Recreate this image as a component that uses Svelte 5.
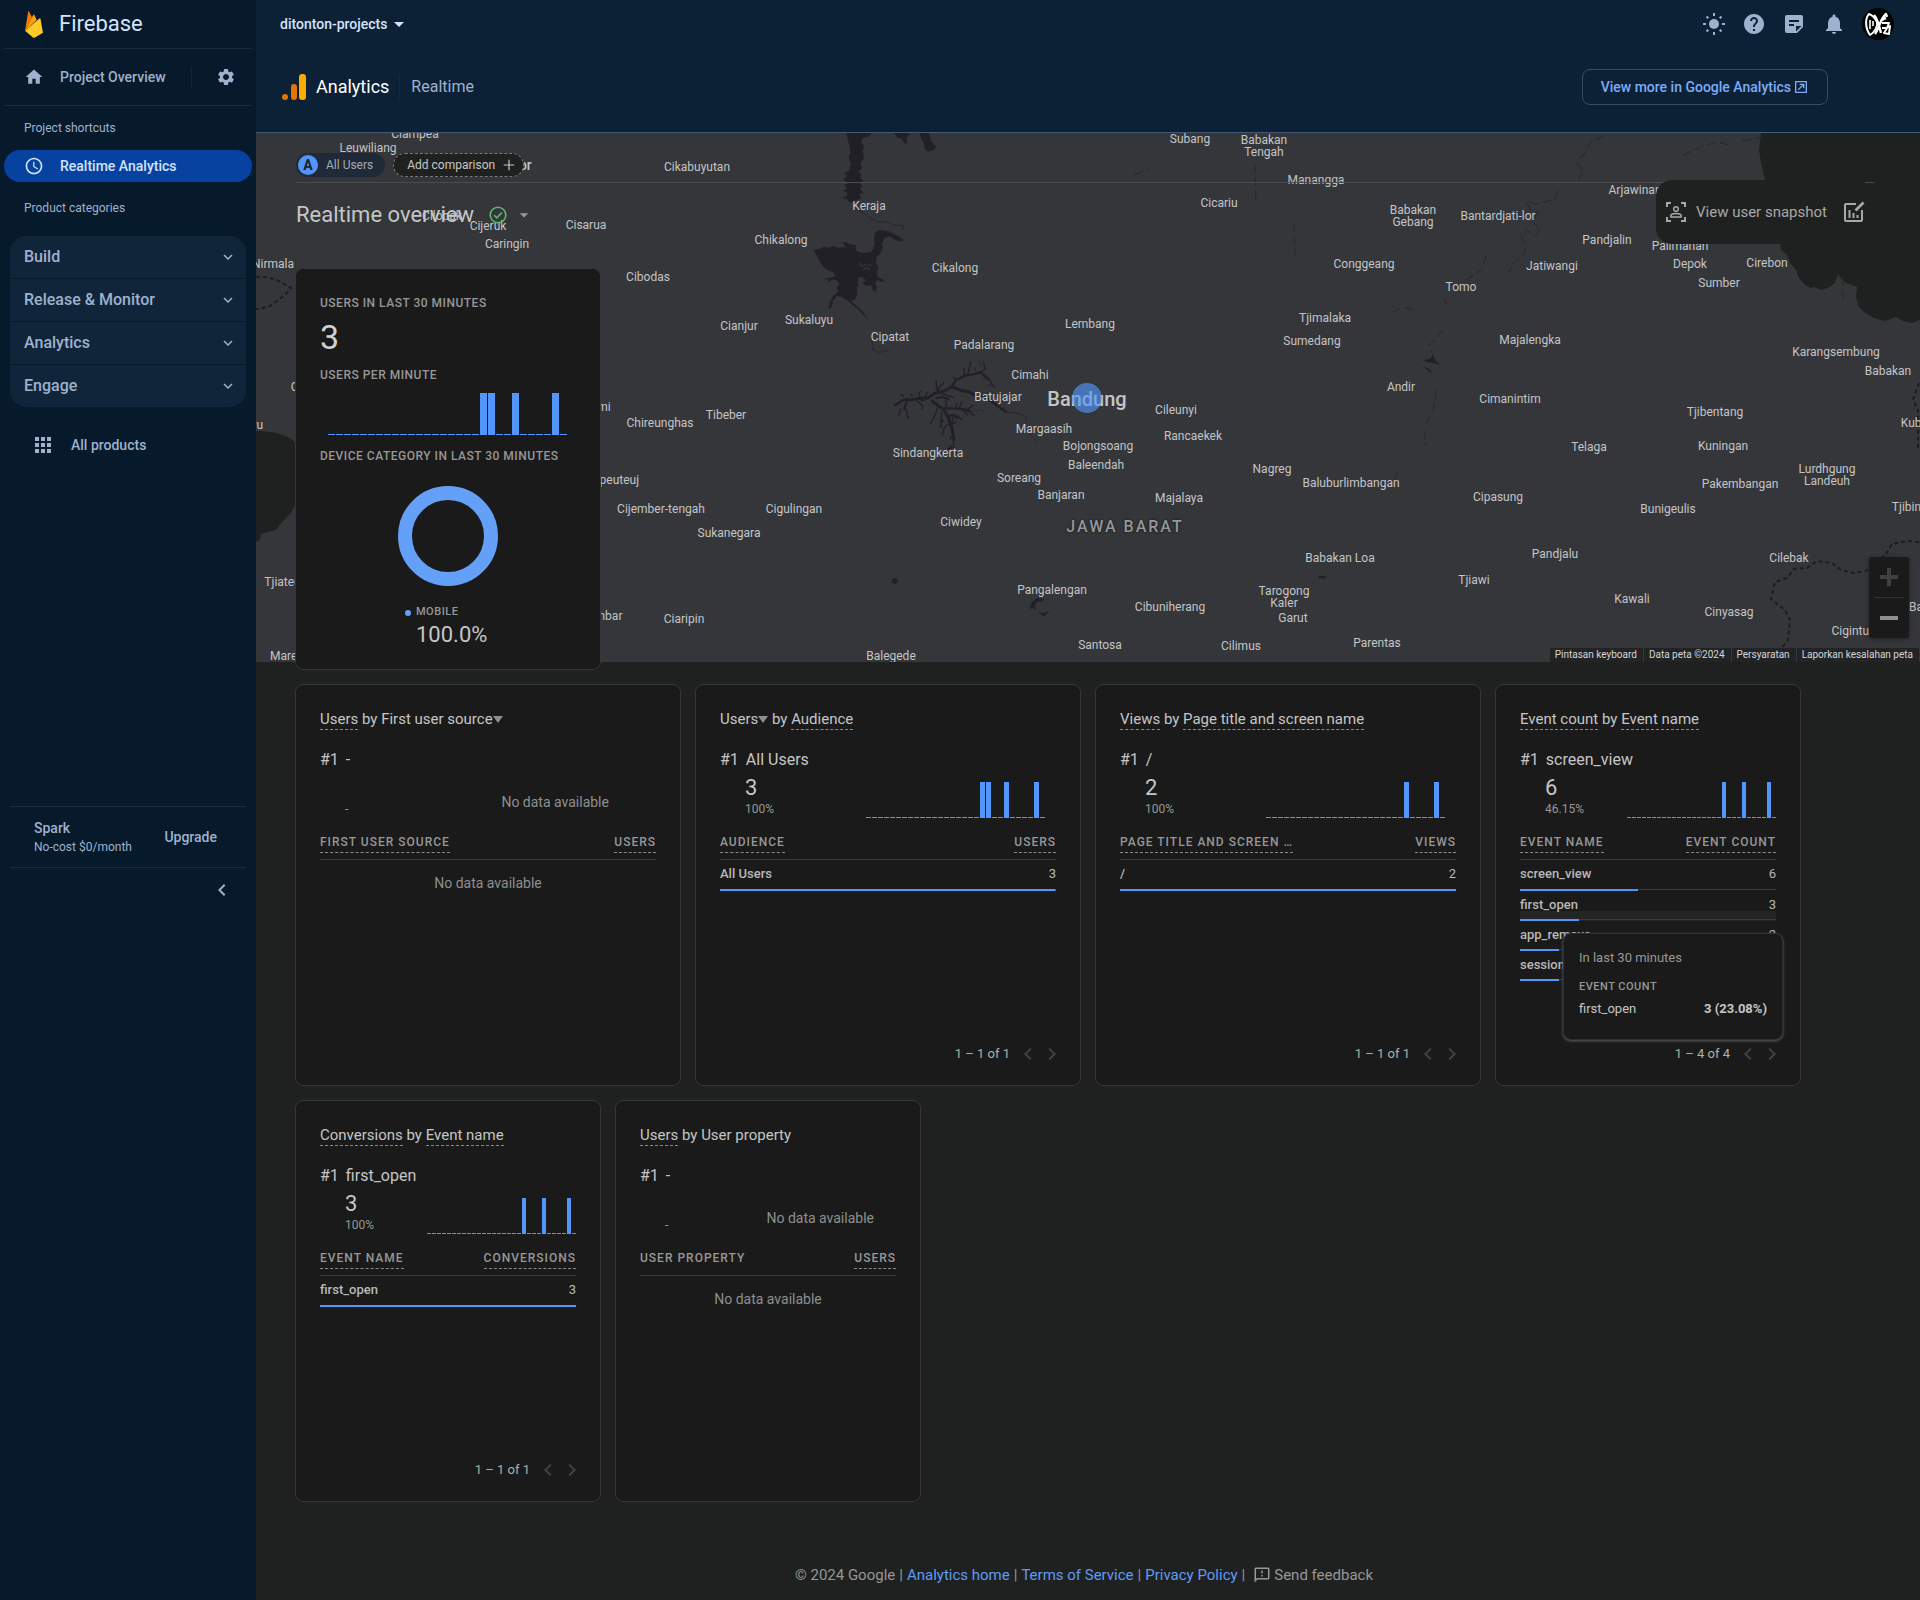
<script>
  const icons = {
    home: 'M10 20v-6h4v6h5v-8h3L12 3 2 12h3v8z',
    gear: 'M19.14 12.94c.04-.3.06-.61.06-.94 0-.32-.02-.64-.07-.94l2.03-1.58c.18-.14.23-.41.12-.61l-1.92-3.32c-.12-.22-.37-.29-.59-.22l-2.39.96c-.5-.38-1.03-.7-1.62-.94l-.36-2.54c-.04-.24-.24-.41-.48-.41h-3.84c-.24 0-.43.17-.47.41l-.36 2.54c-.59.24-1.13.57-1.62.94l-2.39-.96c-.22-.08-.47 0-.59.22L2.74 8.87c-.12.21-.08.47.12.61l2.03 1.58c-.05.3-.09.63-.09.94s.02.64.07.94l-2.03 1.58c-.18.14-.23.41-.12.61l1.92 3.32c.12.22.37.29.59.22l2.39-.96c.5.38 1.03.7 1.62.94l.36 2.54c.05.24.24.41.48.41h3.84c.24 0 .44-.17.47-.41l.36-2.54c.59-.24 1.13-.56 1.62-.94l2.39.96c.22.08.47 0 .59-.22l1.92-3.32c.12-.22.07-.47-.12-.61l-2.01-1.58zM12 15.6c-1.98 0-3.6-1.62-3.6-3.6s1.62-3.6 3.6-3.6 3.6 1.62 3.6 3.6-1.62 3.6-3.6 3.6z',
    clock: 'M12 2C6.47 2 2 6.48 2 12s4.47 10 10 10 10-4.48 10-10S17.52 2 12 2zm0 18c-4.42 0-8-3.58-8-8s3.58-8 8-8 8 3.58 8 8-3.58 8-8 8zm.5-13H11v6l5.25 3.15.75-1.23-4.5-2.67z',
    down: 'M16.59 8.59L12 13.17 7.41 8.59 6 10l6 6 6-6z',
    left: 'M15.41 7.41L14 6l-6 6 6 6 1.41-1.41L10.83 12z',
    right: 'M10 6L8.59 7.41 13.17 12l-4.58 4.59L10 18l6-6z',
    caret: 'M7 10l5 5 5-5z',
    apps: 'M4 8h4V4H4v4zm6 12h4v-4h-4v4zm-6 0h4v-4H4v4zm0-6h4v-4H4v4zm6 0h4v-4h-4v4zm6-10v4h4V4h-4zm-6 4h4V4h-4v4zm6 6h4v-4h-4v4zm0 6h4v-4h-4v4z',
    help: 'M12 2C6.48 2 2 6.48 2 12s4.48 10 10 10 10-4.48 10-10S17.52 2 12 2zm1 17h-2v-2h2v2zm2.07-7.75l-.9.92C13.45 12.9 13 13.5 13 15h-2v-.5c0-1.1.45-2.1 1.17-2.83l1.24-1.26c.37-.36.59-.86.59-1.41 0-1.1-.9-2-2-2s-2 .9-2 2H8c0-2.21 1.79-4 4-4s4 1.79 4 4c0 .88-.36 1.68-.93 2.25z',
    note: 'M3 5a2 2 0 0 1 2-2h14a2 2 0 0 1 2 2v10l-6 6H5a2 2 0 0 1-2-2zM7 8v2h10V8zM7 12v2h5v-2zM14 14v5.5l5.5-5.5z',
    bell: 'M12 22c1.1 0 2-.9 2-2h-4c0 1.1.89 2 2 2zm6-6v-5c0-3.07-1.64-5.64-4.5-6.32V4c0-.83-.67-1.5-1.5-1.5s-1.5.67-1.5 1.5v.68C7.63 5.36 6 7.92 6 11v5l-2 2v1h16v-1l-2-2z',
    external: 'M3 3h18v18H3zM5 5v14h14V5zM10 7h7v7h-2v-3.600l-6.600 6.600-1.400-1.400L13.600 9H10z',
    plus: 'M19 12.800h-6.200V19h-1.600v-6.200H5v-1.600h6.200V5h1.600v6.200H19z',
    feedback: 'M20 2H4c-1.100 0-1.990.9-1.990 2L2 22l4-4h14c1.100 0 2-.9 2-2V4c0-1.100-.9-2-2-2zm0 14H5.170L4 17.170V4h16v12zm-9-4h2v2h-2zm0-6h2v4h-2z'
  };

  const categories = ['Build', 'Release & Monitor', 'Analytics', 'Engage'];

  // Map labels: text, then the label's centre in page units.
  const mapOrigin = { x: 256, y: 132 };
  const places = [
    ['Ciampea', 415, 133], ['Leuwiliang', 368, 147], ['Cikabuyutan', 697, 166], ['Cilobak', 442, 215],
    ['Cijeruk', 488, 225], ['Cisarua', 586, 224], ['Caringin', 507, 243], ['Chikalong', 781, 239],
    ['Nirmala', 273, 263], ['Cinagri', 482, 273], ['Cibodas', 648, 276], ['Cianjur', 739, 325],
    ['Sukaluyu', 809, 319], ['Cikidang', 314, 386], ['Cidayu', 245, 424], ['Sukabumi', 584, 406],
    ['Tibeber', 726, 414], ['Chireunghas', 660, 422], ['Cipeuteuj', 614, 479], ['Cijember-tengah', 661, 508],
    ['Cigulingan', 794, 508], ['Sukanegara', 729, 532], ['Tjiateul', 284, 581], ['Cikembar', 597, 615],
    ['Ciaripin', 684, 618], ['Marenang', 297, 655], ['Keraja', 869, 205], ['Cikalong', 955, 267],
    ['Cipatat', 890, 336], ['Padalarang', 984, 344], ['Lembang', 1090, 323], ['Cimahi', 1030, 374],
    ['Batujajar', 998, 396], ['Cileunyi', 1176, 409], ['Rancaekek', 1193, 435], ['Margaasih', 1044, 428],
    ['Bojongsoang', 1098, 445], ['Baleendah', 1096, 464], ['Soreang', 1019, 477], ['Banjaran', 1061, 494],
    ['Majalaya', 1179, 497], ['Nagreg', 1272, 468], ['Baluburlimbangan', 1351, 482], ['Ciwidey', 961, 521],
    ['Sindangkerta', 928, 452], ['Babakan Loa', 1340, 557], ['Pangalengan', 1052, 589], ['Cibuniherang', 1170, 606],
    ['Tarogong\nKaler', 1284, 596], ['Garut', 1293, 617], ['Santosa', 1100, 644], ['Cilimus', 1241, 645],
    ['Parentas', 1377, 642], ['Balegede', 891, 655], ['Subang', 1190, 138], ['Babakan\nTengah', 1264, 145],
    ['Manangga', 1316, 179], ['Cicariu', 1219, 202], ['Tjimalaka', 1325, 317], ['Sumedang', 1312, 340],
    ['Conggeang', 1364, 263], ['Babakan\nGebang', 1413, 215], ['Bantardjati-lor', 1498, 215],
    ['Arjawinangun', 1645, 189], ['Pandjalin', 1607, 239], ['Palimanan', 1680, 245], ['Jatiwangi', 1552, 265],
    ['Depok', 1690, 263], ['Cirebon', 1767, 262], ['Sumber', 1719, 282], ['Tomo', 1461, 286],
    ['Majalengka', 1530, 339], ['Karangsembung', 1836, 351], ['Babakan', 1888, 370], ['Andir', 1401, 386],
    ['Cimanintim', 1510, 398], ['Tjibentang', 1715, 411], ['Kuningan', 1723, 445], ['Telaga', 1589, 446],
    ['Kubangsari', 1931, 422], ['Lurdhgung\nLandeuh', 1827, 474], ['Pakembangan', 1740, 483],
    ['Cipasung', 1498, 496], ['Bunigeulis', 1668, 508], ['Tjibingbin', 1918, 506], ['Pandjalu', 1555, 553],
    ['Cilebak', 1789, 557], ['Tjiawi', 1474, 579], ['Kawali', 1632, 598], ['Cinyasag', 1729, 611],
    ['Banjar', 1926, 606], ['Cigintung', 1857, 630]
  ];

  const minutes = Array.from({ length: 30 }, (_, i) => i);

  const wideCards = [
    {
      title: [['Users', 'u'], [' by ', ''], ['First user source', 'menu']],
      top: '-', value: '', share: '-', bars: null,
      cols: ['First user source', 'Users'], rows: []
    },
    {
      title: [['Users', 'menu'], [' by ', ''], ['Audience', 'u']],
      top: 'All Users', value: '3', share: '100%', bars: [19, 20, 23, 28],
      cols: ['Audience', 'Users'], rows: [['All Users', 3, 100]], pages: '1 – 1 of 1'
    },
    {
      title: [['Views', 'u'], [' by ', ''], ['Page title and screen name', 'u']],
      top: '/', value: '2', share: '100%', bars: [23, 28],
      cols: ['Page title and screen …', 'Views'], rows: [['/', 2, 100]], pages: '1 – 1 of 1'
    },
    {
      narrow: true,
      title: [['Event count', 'u'], [' by ', ''], ['Event name', 'u']],
      top: 'screen_view', value: '6', share: '46.15%', bars: [19, 23, 28],
      cols: ['Event name', 'Event count'],
      rows: [['screen_view', 6, 46.15], ['first_open', 3, 23.08], ['app_remove', 2, 15.38], ['session_start', 2, 15.38]],
      hovered: 1, pages: '1 – 4 of 4'
    }
  ];
  const narrowCards = [
    {
      narrow: true,
      title: [['Conversions', 'u'], [' by ', ''], ['Event name', 'u']],
      top: 'first_open', value: '3', share: '100%', bars: [19, 23, 28],
      cols: ['Event name', 'Conversions'], rows: [['first_open', 3, 100]], pages: '1 – 1 of 1'
    },
    {
      narrow: true, plainFirst: true,
      title: [['Users', 'u'], [' by ', ''], ['User property', '']],
      top: '-', value: '', share: '-', bars: null,
      cols: ['User property', 'Users'], rows: []
    }
  ];
</script>

{#snippet icon(name, size)}
  <svg class="icon" width={size} height={size} viewBox="0 0 24 24" aria-hidden="true"><path fill-rule="evenodd" d={icons[name]} /></svg>
{/snippet}

{#snippet chart(peaks, kind)}
  <div class="chart {kind}" aria-hidden="true">
    {#each minutes as m}<i class:peak={peaks.includes(m)}></i>{/each}
  </div>
{/snippet}

{#snippet report(card)}
  <article class="card">
    <h2>
      {#each card.title as [text, kind]}{#if kind === 'menu'}<button class="plain">{text}<svg class="tri" width="10" height="7" viewBox="0 0 10 7" aria-hidden="true"><path d="M0 0h10L5 7z" /></svg></button>{:else if kind === 'u'}<span class="hint">{text}</span>{:else}<span class="join">{text}</span>{/if}{/each}
    </h2>
    <p class="top"><span>#1</span><span>{card.top}</span></p>
    <div class="stat">
      <div class="figures"><b>{card.value}</b><small>{card.share}</small></div>
      <div class="trend" class:narrow={card.narrow}>
        {#if card.bars}{@render chart(card.bars, card.narrow ? 'slim' : '')}{:else}<span class="none">No data available</span>{/if}
      </div>
    </div>
    <table>
      <thead>
        <tr>
          <th scope="col"><span class:hint={!card.plainFirst}>{card.cols[0]}</span></th>
          <th scope="col"><span class="hint">{card.cols[1]}</span></th>
        </tr>
      </thead>
      <tbody>
        {#each card.rows as [name, count, share], i}
          <tr class="row" class:hovered={card.hovered === i} style="--share: {share}%"><td>{name}</td><td>{count}</td></tr>
        {:else}
          <tr><td class="none empty" colspan="2">No data available</td></tr>
        {/each}
      </tbody>
    </table>
    {#if card.pages}
      <div class="pager">
        <span>{card.pages}</span>
        <button aria-label="Previous page" disabled>{@render icon('left', 24)}</button>
        <button aria-label="Next page" disabled>{@render icon('right', 24)}</button>
      </div>
    {/if}
    {#if card.hovered !== undefined}
      <div class="tooltip" role="tooltip">
        <p>In last 30 minutes</p>
        <p class="label">Event count</p>
        <p class="pair"><span>first_open</span><b>3 (23.08%)</b></p>
      </div>
    {/if}
  </article>
{/snippet}

<div class="app">
  <aside>
    <a class="brand" href="#home">
      <svg width="20" height="27" viewBox="4 0 24 35" aria-hidden="true">
        <path fill="#f57c00" d="M4.400 25.700L8.500.6c.1-.8.600-.9 1-.1l4 8z" />
        <path fill="#ffa000" d="M19.600 11.600L4.400 25.700 15 5.100c.4-.7 1-.7 1.400 0z" />
        <path fill="#ffca28" d="M23.100 9.600c.6-.5 1.200-.4 1.300.4l3.200 18.200-10.400 6.100c-.8.4-1.800.4-2.500 0L4.400 25.700z" />
      </svg>
      <span>Firebase</span>
    </a>
    <div class="overview">
      <a href="#overview">{@render icon('home', 20)}<span>Project Overview</span></a>
      <button aria-label="Project settings">{@render icon('gear', 20)}</button>
    </div>
    <h3>Project shortcuts</h3>
    <a class="active" href="#realtime">{@render icon('clock', 20)}<span>Realtime Analytics</span></a>
    <h3 class="second">Product categories</h3>
    <nav>
      {#each categories as name}
        <button><span>{name}</span>{@render icon('down', 18)}</button>
      {/each}
    </nav>
    <a class="products" href="#products">{@render icon('apps', 24)}<span>All products</span></a>
    <div class="plan">
      <div><b>Spark</b><small>No-cost $0/month</small></div>
      <button>Upgrade</button>
    </div>
    <button class="collapse" aria-label="Collapse menu">{@render icon('left', 24)}</button>
  </aside>

  <div class="page">
    <header>
      <div class="bar">
        <button class="project">ditonton-projects{@render icon('caret', 24)}</button>
        <div class="tools">
          <button aria-label="Theme">
            <svg class="icon" width="24" height="24" viewBox="0 0 24 24" aria-hidden="true">
              <circle cx="12" cy="12" r="5" />
              <path class="rays" d="M12 1v3M12 20v3M1 12h3M20 12h3M4.500 4.500l1.800 1.800M17.700 17.700l1.800 1.800M4.500 19.500l1.800-1.800M17.700 6.300l1.800-1.800" />
            </svg>
          </button>
          <button aria-label="Help">{@render icon('help', 24)}</button>
          <button aria-label="Release notes">{@render icon('note', 24)}</button>
          <button aria-label="Notifications">{@render icon('bell', 24)}</button>
          <button class="avatar" aria-label="Account">
            <svg width="32" height="32" viewBox="0 0 32 32" aria-hidden="true">
              <circle cx="16" cy="16" r="16" fill="#000" />
              <g fill="none" stroke="#fff" stroke-width="2" stroke-linejoin="round">
                <path d="M7 6C3 10 3 20 8 27c5-3 8-9 7-13C13 10 10 7 7 6z" />
                <path stroke-width="1.600" d="M8 12v9M11 13v5" />
                <path stroke-width="2.400" d="M12 7c3 3 5 10 7 18M13 26c4-5 5-15 11-20l1 3M20 12l4-2" />
                <path d="M20 15h7l-2 5 3-2-1 8-5-1 3-5h-5" />
              </g>
            </svg>
          </button>
        </div>
      </div>
      <div class="product">
        <svg width="24" height="26" viewBox="0 0 24 26" aria-hidden="true">
          <circle cx="3" cy="23" r="3" fill="#e37400" />
          <rect x="9" y="10" width="6" height="16" rx="3" fill="#e37400" />
          <rect x="17" y="0" width="7" height="26" rx="3" fill="#f9ab00" />
        </svg>
        <h1>Analytics</h1>
        <span class="crumb">Realtime</span>
        <a class="more" href="#analytics">View more in Google Analytics{@render icon('external', 16)}</a>
      </div>
    </header>

    <main>
      <section class="hero">
        <div class="map">
          <svg class="terrain" width="1664" height="529" viewBox="256 133 1664 529" aria-hidden="true">
            <g class="sea">
              <path d="M1761 133l-2 17 2 13 4 17v60l15 4 1 6 6 5 3 8 6 7 3 8 6 7 6 3 3-1 7 3 7-2 7-5 3-9 6 8 5 2 8 3-1 10 3 10 5 5 10 6 11 3 11-4 7 4 9 2 8-3V133z" />
              <path d="M256 431h7l14 2 11 4 8 6 9 30-9 31-6 10-7 7-7 9-8 2-7 2-1 6-4 2z" />
            </g>
            <g class="lake" transform="translate(810 133) scale(.3333)">
              <path d="M108 0h78l-8 10-18 4-6 14 8 12-4 14 4 22-10 14 4 18-10 6 8 10-4 10 10 8-10 8 8 10-8 6 10 14-12 4 6 14-16 4-8 8-14-4-4-8-16-2 14-8 2-8-14-8 14-4-10-14 12-2-14-14 10-6-6-14 14-4 4-24-6-16 6-16-4-20z" />
              <path d="M252 0h48l-8 12-2 22-10-6-4-10-14-4zM328 0h30l6 26 14 12-4 12-20 6-12-10 2-12-8-10z" />
              <path d="M10 350l18-2 12-6 20 2 6-6 18 6 18-2 8 6-6-10-6-8 10-4 10 8 20 2-2 10 6 10 22 4 22-4 8-24-2-20 4-14 12-6 26 2 20 10 24 14-2 8-20-4-16-12-16 4-8 18 2 12-8 20-10 8-2 20 8 12-6 14 4 14 22 12-14 2-10-6-6 12 6 12-6 14-8-8-4-14-16 2-10-8 10-8-12-10-12 2 0 20-4 16 2 16-8 14-14 4-12-4-12-8-14-4-12 14-6 22-10 4 6-22 10-18 14-12-4-14 8-6-8-16-14 0-10 8-2-8-14-4 22-2 14-4-6-12-20-8-12-12-8-12z" />
              <path class="cut" d="M146 390l10 10 14-6M160 410l12-6 8 6M176 396l8 2" />
              <path class="arm" stroke-width="9" d="M280 800l22 0 30-4 24-2 16-12 26-6 28-14 28 10 20 4 28 14M364 802l18 14 20 14 14 26 8 24 6 26 2 18M352 796l-20 6" />
              <path class="arm" stroke-width="7" d="M424 762l14-20 26-14 24-4 24-6 12 10 12 12M512 784l30 20 22 16 26 18M380 782l6-16M280 800l-14 10-14 8M290 806l-8 26M400 826l30 0 26 2 26 6M410 852l20-6 14 10M376 796l22-4 20 8" />
              <path class="arm" stroke-width="4" d="M464 728l-2-24M474 722l8-36M512 718l14-10-6-22M536 738l18 28M440 740l-12-8M380 770l-2-30M386 766l16-18M282 790l-12-6M308 790l-6-8M330 790l-4-10 10-6M288 826l6 32M272 826l-6 24M320 802l18 16-2 12M344 796l8-20M384 820l-10 30-14 24M396 836l-4 40 6 10M400 860l-12 22M420 870l-16 12-8 26M420 884l10 4-2 12M432 900l-12 20M430 920l2 30M432 940l-18 10 10-14M446 828l10-22M456 828l18 20M470 832l20-16M470 832l24 16M440 846l16 16M430 850l-4 24 14-8M396 782l36 12M410 822l-4-20M438 826l2-16" />
              <path class="arm" stroke-width="2" d="M590 838l22 0 32 8M482 836l30-6 14 10M650 848l-4 16M656 900l28 28M514 700l-6-16M498 716l-4-14M532 740l-14-6M546 756l-14 2" />
              <path class="arm" stroke-width="5" d="M104 486l20 24 24 18 16 20" />
              <path class="arm" stroke-width="2" d="M164 548l12 14M140 230l24 12 20 16 24 10 20-2 26 10 24 2 2 12M182 618l8 20 0 12 18 10 14-6 16 2M190 650l-6-6" />
            </g>
            <path class="lake" d="M892 579l4-1 2 3-2 3-4-1zM1318 576h9l-3 3-5-1zM1031 603l6-5 7 1-1 2-6 1-2 3 1 5-3-2-3 1zM1038 612l5 1 7-2-4 3-2 3-2-2zM1422 360l8-1 3-5 2 6 5 5-7-2-6-1zM1423 367l7 2 2 6-3-4z" />
            <g class="river">
              <path d="M1134 175l15-6M1255 164l1 40M1294 223l1 34" />
              <path d="M1604 136l-13 6-7 12-7 8 6 9-5 9M1558 190l-3 8-9 4-10 2-9-2 3 8 8 2-6 10 8 6-4 8-9-6-6 8 5 6-2 10-10 8-5 10M1486 255l-4 14-8 6-12 8M1683 155l18-8 16-5 12 3M1742 141l20-4" />
              <path d="M1444 298l2 6M1393 312l6-4 14 1M1443 330l-14 16 3 6M1436 390l-2 18-8 16M1424 430l2 16M1394 480l4-10M1843 277v26" />
            </g>
            <g class="border">
              <path d="M256 277h11l10 3 14 8-6 7-15 11-10 3h-4" />
              <path d="M1919 383l-6 17 5 10v40M1919 542l-11-1-16 3-6 10-17 16-16 3-12-3-9-7-15-2-10 7-13 1-7 9-12 4-4 17 14 11 5 10-2 20-7 9" />
            </g>
          </svg>
          {#each places as [name, x, y]}
            <span class="place" style="left: {x - mapOrigin.x}px; top: {y - mapOrigin.y}px">{name}</span>
          {/each}
          <span class="place town" style="left: {513 - mapOrigin.x}px; top: {164 - mapOrigin.y}px">Bogor</span>
          <span class="place city" style="left: {1087 - mapOrigin.x}px; top: {398 - mapOrigin.y}px">Bandung</span>
          <span class="place province" style="left: {1125 - mapOrigin.x}px; top: {526 - mapOrigin.y}px">JAWA BARAT</span>
          <span class="spot" style="left: {1087 - mapOrigin.x}px; top: {397 - mapOrigin.y}px"></span>
          <div class="zoom">
            <button aria-label="Zoom in" disabled><svg width="18" height="18" viewBox="0 0 18 18"><path d="M7 0h4v7h7v4h-7v7H7v-7H0V7h7z" /></svg></button>
            <button aria-label="Zoom out"><svg width="18" height="18" viewBox="0 0 18 18"><path d="M0 7h18v4H0z" /></svg></button>
          </div>
          <div class="credits">
            <button>Pintasan keyboard</button><span>Data peta ©2024</span><a href="#terms">Persyaratan</a><a href="#report">Laporkan kesalahan peta</a>
          </div>
        </div>

        <div class="overlay">
          <div class="compare">
            <button class="chip"><i>A</i>All Users</button>
            <button class="chip add">Add comparison{@render icon('plus', 18)}</button>
          </div>
          <div class="titlebar">
            <h2>Realtime overview</h2>
            <button class="status" aria-label="Data quality">
              <svg width="18" height="18" viewBox="0 0 18 18" aria-hidden="true"><g fill="none" stroke="#5bb974" stroke-width="1.600"><circle cx="9" cy="9" r="7.800" /><path d="M5.200 9.200l2.600 2.600 5-5.200" /></g></svg>
              {@render icon('caret', 20)}
            </button>
            <div class="snapshot">
              <button>
                <svg width="20" height="20" viewBox="0 0 20 20" aria-hidden="true"><g fill="none" stroke="currentColor" stroke-width="2"><path d="M1 5V1h4M15 1h4v4M19 15v4h-4M5 19H1v-4" /><g stroke-width="1.500"><circle cx="10" cy="7" r="2.300" /><path d="M4.800 15v-1.200c0-3.200 10.400-3.200 10.400 0V15z" /></g></g></svg>
                <span>View user snapshot</span>
              </button>
              <button aria-label="Customize report">
                <svg width="22" height="22" viewBox="0 0 22 22" aria-hidden="true"><g fill="none" stroke="currentColor" stroke-width="2"><path d="M13 3H3a1 1 0 0 0-1 1v15a1 1 0 0 0 1 1h15a1 1 0 0 0 1-1V9" /><path d="M6.500 9v8M10.500 12v5M14.500 14v3" /><path stroke-width="2.600" d="M12.500 9.500L20.500 1.500" /></g></svg>
              </button>
            </div>
          </div>
          <article class="card live">
            <h3 class="label">Users in last 30 minutes</h3>
            <p class="now">3</p>
            <h3 class="label">Users per minute</h3>
            {@render chart([19, 20, 23, 28], 'large')}
            <h3 class="label">Device category in last 30 minutes</h3>
            <svg class="donut" width="100" height="100" viewBox="0 0 100 100" aria-hidden="true"><circle cx="50" cy="50" r="43" /></svg>
            <div class="legend"><i></i><div><span class="label">Mobile</span><b>100.0%</b></div></div>
          </article>
        </div>
      </section>

      <section class="grid">
        {#each wideCards as card}{@render report(card)}{/each}
      </section>
      <section class="grid small">
        {#each narrowCards as card}{@render report(card)}{/each}
      </section>
    </main>

    <footer>
      <span>© 2024 Google</span><span>|</span><a href="#ga">Analytics home</a><span>|</span><a href="#tos">Terms of Service</a><span>|</span><a href="#privacy">Privacy Policy</a><span>|</span>
      <button>{@render icon('feedback', 18)}Send feedback</button>
    </footer>
  </div>
</div>

<style>
  :global(body) { background: #1f2120; }
  .app {
    display: flex;
    min-height: 100vh;
    font: 400 12px/16px Roboto, sans-serif;
    color: #c6c6c6;
  }
  .app :global(*) { box-sizing: border-box; }
  h1, h2, h3, p { margin: 0; font: inherit; }
  a { color: inherit; text-decoration: none; }
  button { border: 0; padding: 0; background: none; color: inherit; font: inherit; cursor: pointer; }
  svg { display: block; flex: none; }
  .icon { fill: currentColor; }

  /* Sidebar */
  aside {
    flex: none;
    width: 256px;
    display: flex;
    flex-direction: column;
    background: #061a2b;
    color: #9fb1cd;
  }
  .brand {
    display: flex;
    align-items: center;
    gap: 15px;
    height: 49px;
    margin: 0 4px;
    padding: 0 20px;
    border-bottom: 1px solid #1a2d40;
    font-size: 22px;
    line-height: 28px;
    color: #d3e3fd;
  }
  .overview {
    display: flex;
    align-items: center;
    justify-content: space-between;
    height: 57px;
    margin: 0 4px;
    padding: 0 16px 1px 20px;
    border-bottom: 1px solid #1a2d40;
    font-size: 14px;
    font-weight: 500;
  }
  .overview a { display: flex; align-items: center; gap: 16px; }
  .overview button {
    display: flex;
    justify-content: flex-end;
    width: 45px;
    border-left: 1px solid #14273a;
  }
  aside h3 { margin: 14px 24px; }
  .active {
    display: flex;
    align-items: center;
    gap: 16px;
    height: 32px;
    margin: 0 4px;
    padding: 0 20px 1px;
    border-radius: 16px;
    background: #0842a0;
    color: #d3e3fd;
    font-size: 14px;
    font-weight: 500;
  }
  aside h3.second { margin: 18px 24px 20px; }
  nav {
    display: flex;
    flex-direction: column;
    gap: 1px;
    margin: 0 10px;
    border-radius: 16px;
    overflow: hidden;
  }
  nav button {
    display: flex;
    align-items: center;
    justify-content: space-between;
    height: 42px;
    padding: 0 9px 0 14px;
    background: #10253a;
    font-size: 16px;
    font-weight: 500;
  }
  .products {
    display: flex;
    align-items: center;
    gap: 16px;
    margin: 26px 31px;
    font-size: 14px;
    font-weight: 500;
  }
  .plan {
    display: flex;
    align-items: center;
    justify-content: space-between;
    height: 62px;
    margin: 323px 10px 0;
    padding: 0 29px 0 24px;
    border: solid #1a2d40;
    border-width: 1px 0;
  }
  .plan div { display: grid; gap: 3px; }
  .plan b, .plan button { font-size: 14px; font-weight: 500; }
  .plan small { font-size: 12px; }
  .collapse { align-self: flex-end; margin: 10px 22px; }

  /* Header */
  .page { flex: 1; min-width: 0; display: flex; flex-direction: column; }
  header { background: #0d2136; border-bottom: 1px solid #44597a; }
  .bar {
    display: flex;
    align-items: center;
    justify-content: space-between;
    height: 48px;
    padding: 0 26px 0 24px;
  }
  .project {
    display: flex;
    align-items: center;
    color: #d3e3fd;
    font-size: 14px;
    font-weight: 500;
  }
  .tools { display: flex; align-items: center; gap: 16px; color: #9fb1cd; }
  .rays { fill: none; stroke: currentColor; stroke-width: 2; }
  .product {
    display: flex;
    align-items: center;
    height: 84px;
    padding: 0 92px 6px 26px;
  }
  .product h1 { margin-left: 10px; font-size: 18px; line-height: 24px; color: #fff; }
  .crumb {
    margin-left: 10px;
    padding-left: 11px;
    border-left: 1px solid #14283e;
    font-size: 16px;
    line-height: 24px;
    color: #9fb1cd;
  }
  .more {
    display: flex;
    align-items: center;
    gap: 2px;
    height: 36px;
    margin-left: auto;
    padding: 0 18px;
    border: 1px solid #394b62;
    border-radius: 8px;
    color: #7cacf8;
    font-size: 14px;
    font-weight: 500;
  }

  /* Map */
  .hero { position: relative; }
  .map {
    position: absolute;
    inset: 0 0 auto;
    height: 529px;
    overflow: hidden;
    background: #35363a;
  }
  .terrain { position: absolute; left: 0; top: 0; }
  .sea { fill: #1f2120; }
  .lake { fill: #212026; }
  .arm { fill: none; stroke: #212026; stroke-linejoin: bevel; }
  .cut { fill: none; stroke: #35363a; stroke-width: 4; }
  .river { fill: none; stroke: #27282b; stroke-width: 1; stroke-dasharray: 9 4; }
  .border { fill: none; stroke: #1c1d1f; stroke-width: 2; stroke-dasharray: 4 3; }
  .place {
    position: absolute;
    transform: translate(-50%, -50%);
    color: #c4c5c7;
    font-size: 12px;
    line-height: 12px;
    text-align: center;
    white-space: pre;
  }
  .town { font-size: 14px; font-weight: 500; }
  .city { font-size: 20px; line-height: 24px; font-weight: 500; }
  .province {
    color: #96979a;
    font-size: 16px;
    font-weight: 500;
    letter-spacing: 2px;
    text-shadow: 0 0 2px #1c1d1f, 0 0 2px #1c1d1f;
  }
  .spot {
    position: absolute;
    width: 30px;
    height: 30px;
    margin: -15px;
    border-radius: 50%;
    background: #5296fa;
    opacity: .65;
  }
  .zoom {
    position: absolute;
    right: 11px;
    bottom: 24px;
    width: 40px;
    padding: 0 5px;
    border-radius: 2px;
    background: #1a1a1a;
    box-shadow: 0 1px 4px #0006;
    color: #8f8f8f;
  }
  .zoom button { display: grid; place-items: center; width: 30px; height: 40px; }
  .zoom button:disabled { color: #404040; }
  .zoom button + button { height: 41px; border-top: 1px solid #333; }
  .zoom svg { fill: currentColor; }
  .credits {
    position: absolute;
    right: 1px;
    bottom: 0;
    display: flex;
    gap: 1px;
    font-size: 10px;
    line-height: 14px;
    color: #d6d6d6;
  }
  .credits > * { padding: 0 6px 0 5px; background: #222325; }

  .overlay { position: relative; padding: 20px 119px 0 39px; }
  .compare {
    display: flex;
    gap: 8px;
    margin: 0 -73px 0 1px;
    padding-bottom: 5px;
    border-bottom: 1px solid #4b4c4f;
  }
  .chip {
    display: flex;
    align-items: center;
    gap: 8px;
    height: 24px;
    padding: 0 12px 0 2px;
    border-radius: 12px;
    background: #202938;
    color: #a5a9b0;
  }
  .chip i {
    width: 20px;
    height: 20px;
    border-radius: 50%;
    background: #5296fa;
    color: #182030;
    font: 700 14px/20px Roboto, sans-serif;
  }
  .chip.add {
    gap: 5px;
    padding: 0 5px 0 13px;
    border: 1px dashed #77797a;
    background: #1f2120;
    color: #c6c6c6;
  }
  .titlebar { display: flex; height: 86px; padding-bottom: 22px; align-items: center; }
  .titlebar h2 { margin-left: 1px; font-size: 22px; line-height: 28px; }
  .status { display: flex; align-items: center; gap: 7px; margin-left: 15px; color: #9a9a9a; }
  .snapshot {
    display: flex;
    align-items: center;
    gap: 16px;
    height: 64px;
    margin: -6px -64px 0 auto;
    padding: 0 0 0 10px;
    border-radius: 16px 0 0 16px;
    background: #1f2120;
    color: #a8a8a8;
    font-size: 15px;
  }
  .snapshot button { display: flex; align-items: center; gap: 10px; }

  /* Cards */
  .card {
    position: relative;
    display: flex;
    flex-direction: column;
    min-width: 0;
    min-height: 402px;
    padding: 25px 24px 19px;
    border: 1px solid #353736;
    border-radius: 8px;
    background: #1a1a1a;
  }
  .label { color: #979797; font-weight: 500; letter-spacing: .5px; text-transform: uppercase; }
  .live { width: 306px; margin-top: -1px; padding-top: 26px; }
  .now { margin: 8px 0 12px; font-size: 34px; line-height: 36px; color: #d0d0d0; }
  .chart { display: flex; align-items: flex-end; gap: 1px; height: 36px; }
  .chart i { width: 5px; height: 1px; background: #5296fa; }
  .chart.slim i { width: 4px; }
  .chart.large { height: 42px; margin: 10px 8px 13px; }
  .chart.large i { width: 7px; }
  .chart i.peak { height: 100%; }
  .donut { margin: 22px auto 18px; fill: none; stroke: #64a0f8; stroke-width: 14; }
  .legend { display: flex; align-items: flex-start; gap: 5px; margin-left: 85px; }
  .legend i { width: 6px; height: 6px; margin-top: 6px; border-radius: 50%; background: #64a0f8; }
  .legend div { display: grid; }
  .legend .label { font-size: 11px; }
  .legend b { margin-top: 3px; font-size: 22px; line-height: 24px; font-weight: 400; }

  .grid {
    display: grid;
    grid-template-columns: 386fr 386fr 386fr 306fr;
    gap: 14px;
    margin-top: 14px;
    padding: 0 119px 0 39px;
  }
  .grid.small { grid-template-columns: 306fr 306fr 866fr; }
  .card h2 { display: flex; align-items: flex-start; height: 20px; font-size: 15px; line-height: 19px; white-space: pre; }
  .hint { border-bottom: 1px dashed #8a8a8a; }
  .plain { display: flex; align-items: center; line-height: 19px; }
  .tri { fill: #8f8f8f; }
  .top { display: flex; gap: 7px; margin-top: 18px; font-size: 16px; line-height: 24px; }
  .stat { display: flex; height: 46px; }
  .figures { width: 40%; padding: 4px 0 0 25px; }
  .figures b { display: block; height: 24px; font-size: 22px; line-height: 24px; font-weight: 400; }
  .figures small { display: block; font-size: 12px; line-height: 18px; color: #979797; }
  .trend { width: 60%; display: flex; flex-direction: column; align-items: center; justify-content: flex-end; }
  .trend.narrow { align-items: flex-end; }
  .none { color: #8f8f8f; font-size: 14px; }
  .trend .none { margin-bottom: 8px; }
  .trend.narrow .none { margin-right: 22px; }
  table { width: 100%; margin-top: 12px; border-collapse: collapse; }
  th {
    height: 29px;
    padding: 4px 0 0;
    border-bottom: 1px solid #3a3b3b;
    color: #979797;
    font-weight: 500;
    letter-spacing: 1px;
    text-align: left;
    text-transform: uppercase;
    vertical-align: top;
  }
  th span { display: inline-block; padding-bottom: 2px; }
  td { padding: 0; }
  th:last-child, td:last-child { text-align: right; }
  .row {
    height: 30px;
    background:
      linear-gradient(#5296fa, #5296fa) 0 100% / var(--share) 2px no-repeat,
      linear-gradient(#3a3b3b, #3a3b3b) 0 calc(100% - 1px) / 100% 1px no-repeat;
    font-size: 13px;
  }
  .row:first-child { height: 32px; }
  .row.hovered {
    background:
      linear-gradient(#5296fa, #5296fa) 0 100% / var(--share) 2px no-repeat,
      linear-gradient(#3a3b3b, #3a3b3b) 0 calc(100% - 1px) / 100% 1px no-repeat,
      linear-gradient(#232524, #232524) 0 100% / 100% 10px no-repeat;
  }
  .row td { padding-bottom: 2px; color: #b8b8b8; }
  .row td:first-child { font-weight: 500; }
  td.empty { height: 48px; text-align: center; }
  .pager { display: flex; align-items: center; justify-content: flex-end; margin-top: auto; margin-right: -8px; }
  .pager span { margin-right: 6px; color: #b0b0b0; font-size: 13px; }
  .pager button { color: #404040; cursor: default; }
  .tooltip {
    position: absolute;
    right: 17px;
    bottom: 45px;
    width: 220px;
    height: 107px;
    padding: 16px 15px;
    border: 1px solid #303030;
    border-radius: 8px;
    background: #1a1a1a;
    box-shadow: 0 1px 3px #606060;
    color: #979797;
    font-size: 13px;
  }
  .tooltip .label { margin: 13px 0 6px; font-size: 11px; }
  .pair { display: flex; justify-content: space-between; color: #c6c6c6; }

  footer {
    display: flex;
    justify-content: center;
    gap: 4px;
    margin-top: auto;
    padding: 0 8px 15px 0;
    color: #979797;
    font-size: 15px;
    line-height: 20px;
  }
  footer a { color: #5e9bf5; }
  footer button { display: flex; align-items: center; gap: 3px; margin-left: 4px; }
</style>
